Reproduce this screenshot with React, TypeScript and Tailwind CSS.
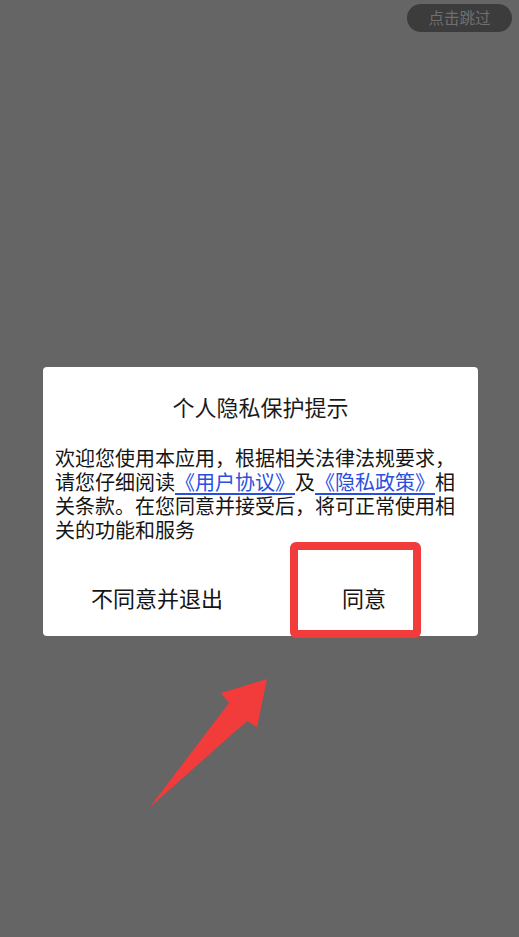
import React from "react";

export default function App() {
  const font = { fontFamily: '"Noto Sans CJK SC", "Noto Sans", sans-serif' };
  return (
    <div
      className="relative w-[519px] h-[937px] overflow-hidden bg-[#656565] [text-spacing-trim:space-all]"
      style={font}
    >
      <div className="flex justify-end pt-[4px] pr-[7px]">
        <div className="w-[105px] h-[28px] rounded-full bg-[#3c3c3c] flex items-center justify-center text-[15.5px] leading-none text-[#707070]">
          点击跳过
        </div>
      </div>

      <div className="mt-[335px] ml-[43px] w-[435px] bg-white rounded-[4px] px-[12px]">
        <div className="pt-[24px] h-[54px] text-center text-[22px] leading-[30px] text-[#1a1a1a]">
          个人隐私保护提示
        </div>
        <p className="mt-[25px] text-[20px] leading-[24px] text-[#151515] [text-spacing-trim:space-all] [font-feature-settings:'halt'_0]">
          欢迎您使用本应用，根据相关法律法规要求，请您仔细阅读
          <span className="text-[#2a4fe0] underline underline-offset-[3px]">《用户协议》</span>
          及
          <span className="text-[#2a4fe0] underline underline-offset-[3px]">《隐私政策》</span>
          相关条款。在您同意并接受后，将可正常使用相关的功能和服务
        </p>
        <div className="mt-[16px] h-[78px] flex gap-[3px] text-[22px] text-[#151515]">
          <div className="flex-1 flex items-center justify-center">不同意并退出</div>
          <div className="flex-1 flex items-center justify-center">同意</div>
        </div>
      </div>

      <div className="absolute left-[290px] top-[542px] w-[131px] h-[96px] border-[8px] border-[#f23b3b] rounded-[6px]" />

      <svg
        className="absolute left-0 top-0"
        width="519"
        height="937"
        viewBox="0 0 519 937"
      >
        <polygon
          points="150,807 229,703 221,693 267,679 257,727 247,721"
          fill="#f23b3b"
        />
      </svg>
    </div>
  );
}
